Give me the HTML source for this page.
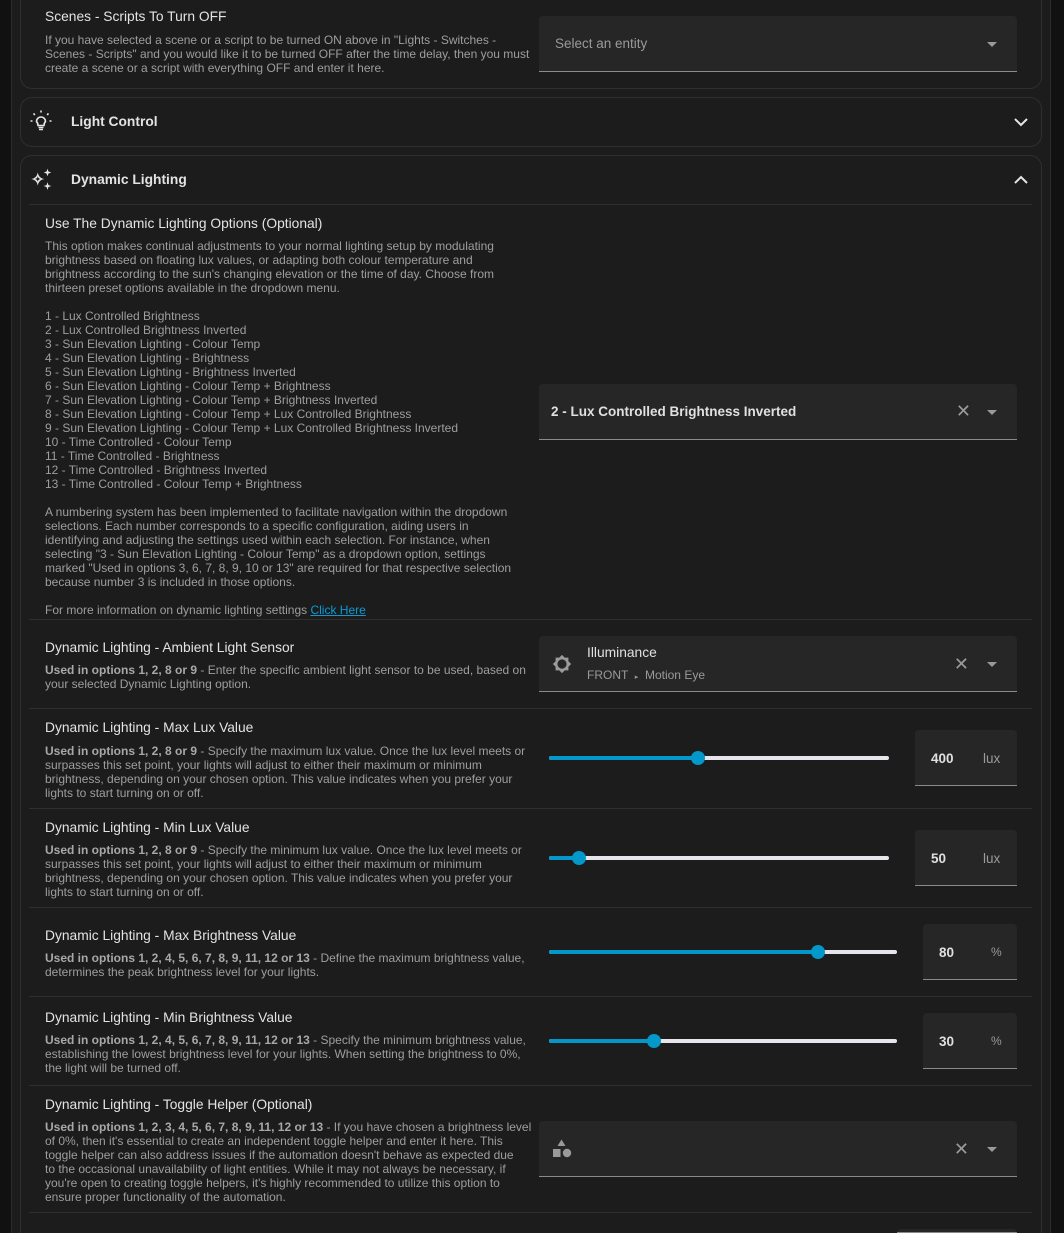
<!DOCTYPE html>
<html><head><meta charset="utf-8"><style>
*{margin:0;padding:0;box-sizing:border-box}
html{width:1064px;height:1233px;overflow:hidden;background:#111}
body{width:1064px;height:1233px;background:#111;overflow:hidden;position:relative;font-family:"Liberation Sans",sans-serif}
.abs{position:absolute}
.panel{left:11px;top:-20px;width:1040px;height:1253px;background:#1c1c1c;border-left:1px solid #2c2c2c;border-right:1px solid #2c2c2c}
.card{position:absolute;left:20px;width:1022px;border:1px solid #2f2f2f;border-radius:12px;background:#1c1c1c}
.t{position:absolute;left:45px;font-size:13.8px;color:#e3e3e3;white-space:nowrap}
.d{position:absolute;left:45px;font-size:12px;line-height:14px;color:#9e9e9e;white-space:nowrap}
.d b{color:#a8a8a8}
.div{position:absolute;left:29px;width:1003px;height:1px;background:#2f2f2f}
.sel{position:absolute;left:539px;width:478px;height:56px;background:#262626;border-radius:4px 4px 0 0;border-bottom:1px solid #8a8a8a}
.arrow{position:absolute;right:20px;top:26px;width:0;height:0;border-left:5px solid transparent;border-right:5px solid transparent;border-top:5px solid #9a9a9a}
.x{position:absolute;right:46px;font-size:18px;color:#9a9a9a;line-height:20px}
.inp{position:absolute;background:#262626;border-radius:4px 4px 0 0;border-bottom:1px solid #8a8a8a;height:56px}
.inp .v{position:absolute;top:21px;font-size:13.5px;font-weight:bold;color:#e0e0e0}
.inp .u{position:absolute;top:21px;font-size:13.5px;color:#9a9a9a}
.track{position:absolute;height:4px;background:#e8e4ec;border-radius:2px}
.fill{position:absolute;height:4px;background:#0398c9;border-radius:2px}
.thumb{position:absolute;width:14px;height:14px;border-radius:50%;background:#0398c9}
</style></head><body>
<div class="abs panel"></div>
<div class="card" style="top:-20px;height:109px"></div>
<div class="card" style="top:97px;height:50px"></div>
<div class="card" style="top:155px;height:1100px"></div>

<div class="t" style="top:9px">Scenes - Scripts To Turn OFF</div>
<div class="d" style="top:33px">If you have selected a scene or a script to be turned ON above in "Lights - Switches -<br>Scenes - Scripts" and you would like it to be turned OFF after the time delay, then you must<br>create a scene or a script with everything OFF and enter it here.</div>
<div class="sel" style="top:16px"><span class="abs" style="left:16px;top:20px;font-size:13.5px;color:#9a9a9a">Select an entity</span><div class="arrow"></div></div>

<svg class="abs" style="left:29px;top:109px" width="24" height="24" viewBox="0 0 24 24"><path d="M9 16.5 Q9 14 7.5 12.5 A4.5 4.5 0 1 1 16.5 12.5 Q15 14 15 16.5 Z M9.5 18.5h5M10 20.5h4" fill="none" stroke="#e6e6e6" stroke-width="1.6"/><path d="M1.5 12h2M20.5 12h2M12 1.5v2M4.5 4.5l1.4 1.4M19.5 4.5l-1.4 1.4" stroke="#e6e6e6" stroke-width="1.6"/></svg>
<div class="t" style="left:71px;top:114px;font-weight:bold">Light Control</div>
<svg class="abs" style="left:1013px;top:116px" width="16" height="12"><path d="M2 3l6 6 6-6" fill="none" stroke="#e6e6e6" stroke-width="2"/></svg>

<svg class="abs" style="left:28px;top:166px" width="26" height="26" viewBox="0 0 24 24" fill="#e6e6e6"><path d="M9 6 Q9.8 11.2 15 12 Q9.8 12.8 9 18 Q8.2 12.8 3 12 Q8.2 11.2 9 6Z M9 9.5 Q8.6 11.6 6.5 12 Q8.6 12.4 9 14.5 Q9.4 12.4 11.5 12 Q9.4 11.6 9 9.5Z" fill-rule="evenodd"/><path d="M18 2.5l.9 2.6 2.6.9-2.6.9-.9 2.6-.9-2.6-2.6-.9 2.6-.9Z M18 15l.9 2.6 2.6.9-2.6.9-.9 2.6-.9-2.6-2.6-.9 2.6-.9Z"/></svg>
<div class="t" style="left:71px;top:172px;font-weight:bold">Dynamic Lighting</div>
<svg class="abs" style="left:1013px;top:174px" width="16" height="12"><path d="M2 9l6-6 6 6" fill="none" stroke="#e6e6e6" stroke-width="2"/></svg>
<div class="div" style="top:204px"></div>

<div class="t" style="top:216px">Use The Dynamic Lighting Options (Optional)</div>
<div class="d" style="top:239px">This option makes continual adjustments to your normal lighting setup by modulating<br>brightness based on floating lux values, or adapting both colour temperature and<br>brightness according to the sun's changing elevation or the time of day. Choose from<br>thirteen preset options available in the dropdown menu.<br><br>1 - Lux Controlled Brightness<br>2 - Lux Controlled Brightness Inverted<br>3 - Sun Elevation Lighting - Colour Temp<br>4 - Sun Elevation Lighting - Brightness<br>5 - Sun Elevation Lighting - Brightness Inverted<br>6 - Sun Elevation Lighting - Colour Temp + Brightness<br>7 - Sun Elevation Lighting - Colour Temp + Brightness Inverted<br>8 - Sun Elevation Lighting - Colour Temp + Lux Controlled Brightness<br>9 - Sun Elevation Lighting - Colour Temp + Lux Controlled Brightness Inverted<br>10 - Time Controlled - Colour Temp<br>11 - Time Controlled - Brightness<br>12 - Time Controlled - Brightness Inverted<br>13 - Time Controlled - Colour Temp + Brightness<br><br>A numbering system has been implemented to facilitate navigation within the dropdown<br>selections. Each number corresponds to a specific configuration, aiding users in<br>identifying and adjusting the settings used within each selection. For instance, when<br>selecting "3 - Sun Elevation Lighting - Colour Temp" as a dropdown option, settings<br>marked "Used in options 3, 6, 7, 8, 9, 10 or 13" are required for that respective selection<br>because number 3 is included in those options.<br><br>For more information on dynamic lighting settings <span style="color:#0a9bd3;text-decoration:underline">Click Here</span></div>
<div class="sel" style="top:384px"><span class="abs" style="left:12px;top:20px;font-size:13.5px;color:#e0e0e0;font-weight:bold">2 - Lux Controlled Brightness Inverted</span><span class="x" style="top:17px">✕</span><div class="arrow"></div></div>
<div class="div" style="top:619px"></div>

<div class="t" style="top:640px">Dynamic Lighting - Ambient Light Sensor</div>
<div class="d" style="top:663px"><b>Used in options 1, 2, 8 or 9</b> - Enter the specific ambient light sensor to be used, based on<br>your selected Dynamic Lighting option.</div>
<div class="sel" style="top:636px">
<svg class="abs" style="left:12px;top:17px" width="22" height="22" viewBox="0 0 24 24"><path d="M12 2l3 3h4v4l3 3-3 3v4h-4l-3 3-3-3H5v-4l-3-3 3-3V5h4z" fill="#9a9a9a"/><circle cx="12" cy="12" r="5" fill="#262626"/></svg>
<span class="abs" style="left:48px;top:9px;font-size:13.8px;color:#e0e0e0">Illuminance</span>
<span class="abs" style="left:48px;top:32px;font-size:12px;color:#9a9a9a">FRONT &nbsp;<span style="font-size:7px">▸</span>&nbsp; Motion Eye</span>
<span class="x" style="top:18px;right:48px">✕</span><div class="arrow"></div></div>
<div class="div" style="top:708px"></div>

<div class="t" style="top:720px">Dynamic Lighting - Max Lux Value</div>
<div class="d" style="top:744px"><b>Used in options 1, 2, 8 or 9</b> - Specify the maximum lux value. Once the lux level meets or<br>surpasses this set point, your lights will adjust to either their maximum or minimum<br>brightness, depending on your chosen option. This value indicates when you prefer your<br>lights to start turning on or off.</div>
<div class="track" style="left:549px;top:756px;width:340px"></div><div class="fill" style="left:549px;top:756px;width:149px"></div><div class="thumb" style="left:691px;top:751px"></div>
<div class="inp" style="left:915px;top:730px;width:102px"><span class="v" style="left:16px">400</span><span class="u" style="left:68px">lux</span></div>
<div class="div" style="top:808px"></div>

<div class="t" style="top:820px">Dynamic Lighting - Min Lux Value</div>
<div class="d" style="top:843px"><b>Used in options 1, 2, 8 or 9</b> - Specify the minimum lux value. Once the lux level meets or<br>surpasses this set point, your lights will adjust to either their maximum or minimum<br>brightness, depending on your chosen option. This value indicates when you prefer your<br>lights to start turning on or off.</div>
<div class="track" style="left:549px;top:856px;width:340px"></div><div class="fill" style="left:549px;top:856px;width:30px"></div><div class="thumb" style="left:572px;top:851px"></div>
<div class="inp" style="left:915px;top:830px;width:102px"><span class="v" style="left:16px">50</span><span class="u" style="left:68px">lux</span></div>
<div class="div" style="top:907px"></div>

<div class="t" style="top:928px">Dynamic Lighting - Max Brightness Value</div>
<div class="d" style="top:951px"><b>Used in options 1, 2, 4, 5, 6, 7, 8, 9, 11, 12 or 13</b> - Define the maximum brightness value,<br>determines the peak brightness level for your lights.</div>
<div class="track" style="left:549px;top:950px;width:348px"></div><div class="fill" style="left:549px;top:950px;width:269px"></div><div class="thumb" style="left:811px;top:945px"></div>
<div class="inp" style="left:923px;top:924px;width:94px"><span class="v" style="left:16px">80</span><span class="u" style="left:68px;font-size:12px">%</span></div>
<div class="div" style="top:996px"></div>

<div class="t" style="top:1010px">Dynamic Lighting - Min Brightness Value</div>
<div class="d" style="top:1033px"><b>Used in options 1, 2, 4, 5, 6, 7, 8, 9, 11, 12 or 13</b> - Specify the minimum brightness value,<br>establishing the lowest brightness level for your lights. When setting the brightness to 0%,<br>the light will be turned off.</div>
<div class="track" style="left:549px;top:1039px;width:348px"></div><div class="fill" style="left:549px;top:1039px;width:105px"></div><div class="thumb" style="left:647px;top:1034px"></div>
<div class="inp" style="left:923px;top:1013px;width:94px"><span class="v" style="left:16px">30</span><span class="u" style="left:68px;font-size:12px">%</span></div>
<div class="div" style="top:1085px"></div>

<div class="t" style="top:1097px">Dynamic Lighting - Toggle Helper (Optional)</div>
<div class="d" style="top:1120px"><b>Used in options 1, 2, 3, 4, 5, 6, 7, 8, 9, 11, 12 or 13</b> - If you have chosen a brightness level<br>of 0%, then it's essential to create an independent toggle helper and enter it here. This<br>toggle helper can also address issues if the automation doesn't behave as expected due<br>to the occasional unavailability of light entities. While it may not always be necessary, if<br>you're open to creating toggle helpers, it's highly recommended to utilize this option to<br>ensure proper functionality of the automation.</div>
<div class="sel" style="top:1121px">
<svg class="abs" style="left:13px;top:18px" width="20" height="20" viewBox="0 0 20 20" fill="#9a9a9a"><path d="M9.5 0.5l4 6.5h-8z"/><rect x="1" y="10" width="7.5" height="8"/><circle cx="15" cy="14" r="4.2"/></svg>
<span class="x" style="top:18px;right:48px">✕</span><div class="arrow"></div></div>
<div class="div" style="top:1212px"></div>
<div class="inp" style="left:897px;top:1229px;width:120px;height:4px"></div>
</body></html>
